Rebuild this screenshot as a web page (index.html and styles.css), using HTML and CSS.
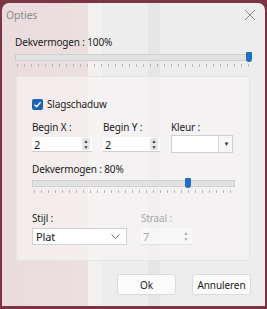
FILE: index.html
```html
<!DOCTYPE html>
<html>
<head>
  <meta charset="UTF-8" />
  <title>Opties</title>
  <link rel="stylesheet" href="styles.css">
</head>
<body>

<div class="window">
  <div class="titlebar">
    <span class="title">Opties</span>
    <svg class="close" width="12" height="12" viewBox="0 0 12 12"><path d="M1 1L11 11M11 1L1 11" stroke="#8a8a8a" stroke-width="1" fill="none"/></svg>
  </div>

  <div class="content">
    <div class="label">Dekvermogen : 100%</div>
    <div class="slider wide">
      <div class="track"></div>
      <div class="thumb" style="left: 231px"></div>
      <div class="ticks"></div>
    </div>

    <div class="group">
      <label class="check"><span class="box"><svg width="9" height="9" viewBox="0 0 9 9"><path d="M1.5 4.6L3.6 6.7L7.6 2.2" stroke="#fff" stroke-width="1.3" fill="none"/></svg></span>Slagschaduw</label>

      <div class="row">
        <div class="field">
          <div class="label">Begin X :</div>
          <div class="spin w60"><span>2</span><span class="arrows"><i>▲</i><i>▼</i></span></div>
        </div>
        <div class="field">
          <div class="label">Begin Y :</div>
          <div class="spin w57"><span>2</span><span class="arrows"><i>▲</i><i>▼</i></span></div>
        </div>
        <div class="field">
          <div class="label">Kleur :</div>
          <div class="colorpick"><span class="swatch"></span><span class="drop">▼</span></div>
        </div>
      </div>

      <div class="label mid">Dekvermogen : 80%</div>
      <div class="slider narrow">
        <div class="track"></div>
        <div class="thumb" style="left: 153px"></div>
        <div class="ticks"></div>
      </div>

      <div class="row bottom">
        <div class="field">
          <div class="label">Stijl :</div>
          <div class="combo"><span>Plat</span><svg width="9" height="5" viewBox="0 0 9 5"><path d="M0.5 0.5L4.5 4.5L8.5 0.5" stroke="#777" fill="none"/></svg></div>
        </div>
        <div class="field disabled">
          <div class="label">Straal :</div>
          <div class="spin w51"><span>7</span><span class="arrows"><i>▲</i><i>▼</i></span></div>
        </div>
      </div>
    </div>

    <div class="buttons">
      <button>Ok</button>
      <button>Annuleren</button>
    </div>
  </div>
</div>

</body>
</html>
```

FILE: styles.css
```css
body { margin: 0; width: 267px; height: 309px; overflow: hidden; background: #7a3444; font-family: "Noto Sans", "Open Sans", sans-serif; font-size: 10px; letter-spacing: -0.15px; color: #1b1b1b; }

.window {
  margin: 3px 0 0 2px; width: 263px; height: 303px; border-radius: 7px 7px 0 0;
  background:
    linear-gradient(90deg, rgba(0,0,0,0) 146px, rgba(225,225,225,0.6) 146px, rgba(225,225,225,0.6) 158px, rgba(0,0,0,0) 158px),
    linear-gradient(90deg, #eadcde 0, #ecdfe0 86px, #f3f0f0 86px, #f3f0f0 100px, rgba(0,0,0,0) 100px),
    #eeeded;
}

.titlebar { height: 24px; display: flex; align-items: center; justify-content: space-between; padding: 0 9px 0 4px; }
.title { color: #8e8e8e; font-size: 10.5px; }

.content { padding: 8px 13px 0 13px; }

.label { line-height: 15px; }

.slider { position: relative; height: 20px; margin-top: 1px; }
.slider .track { position: absolute; left: 0; right: 0; top: 3px; height: 5px; background: #e2e2e2; border: 1px solid #cfcfcf; }
.slider .thumb { position: absolute; top: 1px; width: 6px; height: 10px; background: #1d6fc7; border-radius: 1px 1px 3px 3px; }
.slider .ticks { position: absolute; left: 2px; right: 2px; top: 13px; height: 3px;
  background: repeating-linear-gradient(90deg, #b8b8b8 0 1px, transparent 1px 7px); }
.wide { width: 237px; }
.narrow { width: 203px; margin-top: 0; }

.group { box-sizing: border-box; margin: 5px 0 0 1px; width: 234px; padding: 20px 0 15px 15px; background: rgba(247,245,245,0.65); border: 1px solid #e6e4e4; }

.check { display: flex; align-items: center; gap: 4px; height: 14px; }
.box { width: 11px; height: 11px; background: #1d63b3; border-radius: 2px; display: flex; align-items: center; justify-content: center; }

.row { display: flex; gap: 11px; margin-top: 9px; }
.row .label { margin-bottom: 2px; }

.spin { box-sizing: border-box; height: 15px; display: flex; align-items: center; justify-content: space-between; background: rgba(255,255,255,0.85); border-bottom: 1px solid #cfcfcf; padding-left: 2px; font-size: 11px; }
.w60 { width: 60px; }
.w57 { width: 57px; }
.w51 { width: 51px; }
.arrows { display: flex; flex-direction: column; width: 8px; margin-right: 2px; background: #e6e6e6; }
.arrows i { font-style: normal; font-size: 5px; line-height: 6px; text-align: center; color: #333; }

.colorpick { box-sizing: border-box; width: 62px; height: 18px; display: flex; gap: 2px; border: 1px solid #cfcfcf; background: #f7f7f7; margin-top: -2px; }
.swatch { width: 46px; background: #fff; border-right: 1px solid #d6d6d6; }
.drop { flex: 1; font-size: 6px; display: flex; align-items: center; justify-content: center; color: #333; }

.mid { margin-top: 9px; }

.bottom { gap: 14px; margin-top: 14px; }
.combo { box-sizing: border-box; width: 95px; height: 17px; display: flex; align-items: center; justify-content: space-between; padding: 0 6px 0 3px; background: rgba(255,255,255,0.9); border: 1px solid #d2d2d2; font-size: 11px; }
.bottom .spin { height: 17px; }
.disabled .label, .disabled .spin span { color: #a8a8a8; }
.disabled .spin { background: rgba(255,255,255,0.45); border-bottom-color: #e2e2e2; }
.disabled .arrows { background: transparent; }
.disabled .arrows i { color: #aaa; }

.buttons { display: flex; justify-content: flex-end; gap: 16px; margin: 13px 1px 0 0; }
button { width: 59px; height: 21px; font-family: inherit; font-size: 10px; letter-spacing: -0.1px; color: #1b1b1b; background: #fbfbfb; border: 1px solid #dadada; border-radius: 3px; padding: 0; }
```
